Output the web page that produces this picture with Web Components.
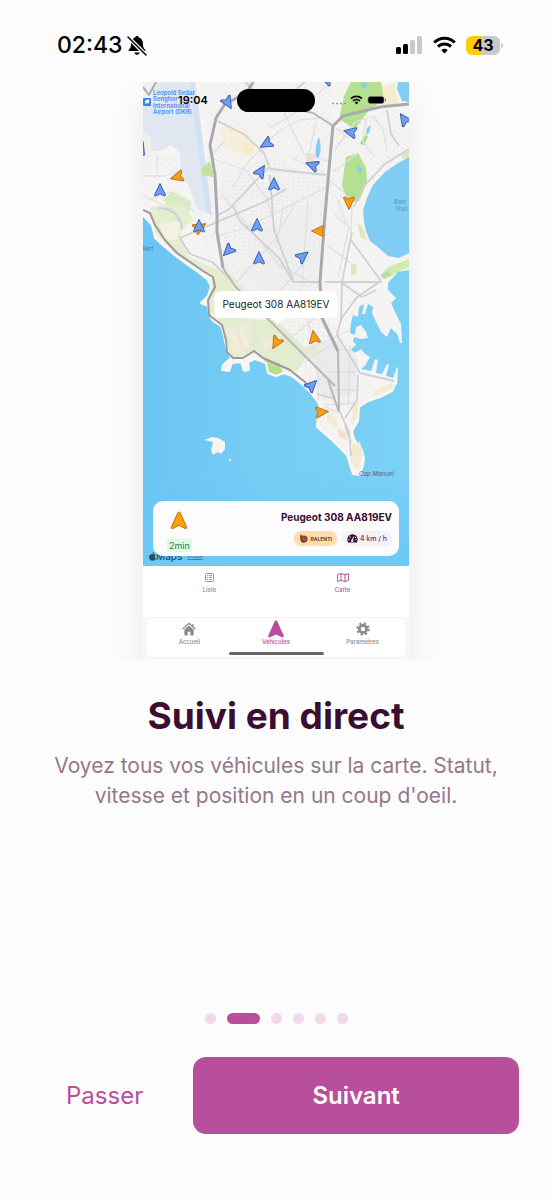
<!DOCTYPE html>
<html lang="fr">
<head>
<meta charset="utf-8">
<meta name="viewport" content="width=device-width, initial-scale=1">
<title>Suivi en direct</title>
<style>
  body {
    background: #fcfcfc;
    font-family: Inter, "Liberation Sans", sans-serif;
    margin: 0;
  }
</style>
</head>
<body>

<onboarding-page>
  <status-bar slot="status" time="02:43" battery="43"></status-bar>
  <app-preview slot="preview"></app-preview>
  <span slot="title">Suivi en direct</span>
  <span slot="text">Voyez tous vos véhicules sur la carte. Statut, vitesse et position en un coup d'oeil.</span>
  <page-dots slot="dots" count="6" current="2"></page-dots>
  <action-bar slot="actions">
    <span slot="skip">Passer</span>
    <span slot="next">Suivant</span>
  </action-bar>
</onboarding-page>

<script>
// status-bar

class StatusBar extends HTMLElement {

  constructor() {
    super();
    this.attachShadow({mode: 'open'});
    this.shadowRoot.innerHTML = `
      <style>
      :host {
        align-items: center;
        box-sizing: border-box;
        color: #000;
        display: flex;
        height: 82px;
        justify-content: space-between;
        padding: 8px 49px 0 57px;
      }

      .side {
        align-items: center;
        display: flex;
      }

      .time {
        font-size: 23px;
        font-weight: 500;
        margin-right: 4px;
      }

      .wifi {
        margin: 0 10px;
      }

      .battery {
        background: linear-gradient(90deg, #ffcc0a 43%, #c9c9c9 43%);
        border-radius: 6px;
        font-size: 16px;
        font-weight: 700;
        line-height: 19px;
        text-align: center;
        width: 34px;
      }

      .cap {
        background: #c9c9c9;
        border-radius: 0 2px 2px 0;
        height: 5px;
        margin-left: 1px;
        width: 2px;
      }

      svg {
        display: block;
      }
      </style>

      <div class="side">
        <span class="time"></span>
        <svg width="20" height="21" viewBox="0 0 20 21">
          <path d="M10 1c1 0 1.700.6 1.900 1.400 2.600.8 4 3 4 5.800 0 3.600.8 5 2.400 6.600.4.500.2 1.200-.5 1.200H2.200c-.8 0-1-.7-.5-1.200C3.300 13.200 4.100 11.800 4.100 8.200 4.100 5.400 5.500 3.200 8.100 2.400 8.300 1.600 9 1 10 1zM7.300 17.500h5.400c-.3 1.300-1.300 2.200-2.700 2.200s-2.400-.9-2.700-2.200z"/>
          <path d="M1 2l18 18" stroke="#fcfcfc" stroke-width="4"/>
          <path d="M1 2l18 18" stroke="#000" stroke-width="1.500" stroke-linecap="round"/>
        </svg>
      </div>
      <div class="side">
        <svg width="27" height="18" viewBox="0 0 27 18">
          <rect x="0" y="11" width="5" height="7" rx="1.500"/>
          <rect x="7" y="8" width="5" height="10" rx="1.500"/>
          <rect x="14" y="4" width="5" height="14" rx="1.500" fill="#c9c9c9"/>
          <rect x="21" y="0" width="5" height="18" rx="1.500" fill="#c9c9c9"/>
        </svg>
        <svg class="wifi" width="23" height="18" viewBox="0 0 23 18" fill="none" stroke="#000" stroke-width="3">
          <path d="M1.200 6.500a14.600 14.600 0 0 1 20.600 0"/>
          <path d="M5 10.600a9.200 9.200 0 0 1 13 0"/>
          <path d="M11.500 17.500l-3.200-3.300a4.500 4.500 0 0 1 6.400 0z" fill="#000" stroke="none"/>
        </svg>
        <div class="battery"></div>
        <div class="cap"></div>
      </div>
    `;
  }

  connectedCallback() {
    this.shadowRoot.querySelector('.time').textContent = this.getAttribute('time');
    this.shadowRoot.querySelector('.battery').textContent = this.getAttribute('battery');
  }

}

customElements.define('status-bar', StatusBar);


// fleet-map

const BLUE = ['#6d9ff6', '#3f5fae'];
const ORANGE = ['#ff9f0a', '#b8741a'];

// x, y, heading, colours
const vehicles = [
  [228, 103, 150, BLUE],
  [266, 144, 240, BLUE],
  [261, 171, 32, BLUE],
  [274, 184, 0, BLUE],
  [141, 148, 20, BLUE],
  [160, 190, 0, BLUE],
  [326, 79, 290, BLUE],
  [312, 165, 290, BLUE],
  [350, 132, 282, BLUE],
  [404, 119, 325, BLUE],
  [200, 227, 60, ORANGE],
  [199, 226, 0, BLUE],
  [257, 225, 0, BLUE],
  [228, 251, 225, BLUE],
  [259, 258, 0, BLUE],
  [303, 256, 52, BLUE],
  [312, 385, 45, BLUE],
  [177, 177, 255, ORANGE],
  [349, 203, 180, ORANGE],
  [318, 231, 270, ORANGE],
  [276, 343, 210, ORANGE],
  [314, 337, 350, ORANGE],
  [322, 412, 85, ORANGE]
];

class FleetMap extends HTMLElement {

  constructor() {
    super();

    let markers = vehicles.map(([x, y, heading, [fill, stroke]]) => `
      <path transform="translate(${x} ${y}) rotate(${heading})" fill="${fill}" stroke="${stroke}"
        d="M0-6.500 5.600 5.300Q5 6.400 3.800 5.800L0 3.800-3.800 5.800Q-5 6.400-5.600 5.300Z"/>
    `).join('');

    this.attachShadow({mode: 'open'});
    this.shadowRoot.innerHTML = `
      <style>
      :host {
        display: block;
      }

      svg {
        display: block;
        width: 100%;
      }

      text {
        font-family: Inter, "Liberation Sans", sans-serif;
        font-size: 6px;
      }
      </style>

      <svg viewBox="143 82 266 484" stroke-linejoin="round">
        <defs>
          <linearGradient id="sea" x1="0" x2="1" y1="0" y2="0">
            <stop offset="0" stop-color="#6ac4f3"/>
            <stop offset=".5" stop-color="#78cdf4"/>
            <stop offset="1" stop-color="#7bd0f5"/>
          </linearGradient>
          <linearGradient id="deep" x1="0" x2="0" y1="0" y2="1">
            <stop offset=".3" stop-color="#6cc8f6" stop-opacity="0"/>
            <stop offset="1" stop-color="#6cc8f6"/>
          </linearGradient>
          <pattern id="blocks" width="6" height="4" patternUnits="userSpaceOnUse" patternTransform="rotate(38)">
            <path d="M0 0H6M0 0V4" stroke="#e4e4e6" fill="none" stroke-width=".7"/>
          </pattern>
          <pattern id="grid" width="5" height="4" patternUnits="userSpaceOnUse" patternTransform="rotate(4)">
            <path d="M0 0H5M0 0V4" stroke="#e2e2e6" fill="none" stroke-width=".7"/>
          </pattern>
        </defs>

        <rect x="143" y="82" width="266" height="484" fill="#f5f4f2"/>

        <!-- built-up areas -->
        <path fill="url(#blocks)" d="M143 155h35l20 60 15 70 60 35 50-10 10-228H205l5 116z"/>
        <path fill="url(#blocks)" d="M333 130l60-22 16 15v30l-45 35-38 90z"/>
        <path fill="url(#grid)" d="M222 175l50-20 52 30-3 125-52 12-45-50z"/>
        <path fill="url(#grid)" d="M270 322l50-12 35 40 3 50-28 22-10-25z"/>
        <path fill="#ececec" opacity=".6" d="M262 230l50-28 6 80-38 20-42-30z"/>
        <path fill="#e9e9ec" opacity=".8" d="M308 345l30-5 20 20-5 35-30 5z"/>

        <!-- airfield -->
        <path fill="#e1e7f1" d="M143 82h49l5 26 5 40 10 67-14-5-10-25-7-12-1-20-9-8-10 6h-10V138l-8-4z"/>
        <path fill="#d3e2f2" d="M190 82h5l8 60 9 74-6-4-8-62z"/>
        <path fill="#f1f0ef" d="M151 138l-8-5v40h8zM143 82v18l8-1 6-17z"/>

        <!-- parks and dry ground -->
        <path fill="#f5efdc" d="M222 125l25 4 8 22-12 5-22-12z"/>
        <path fill="#f5ecd0" d="M240 140l14 2-2 14-10-3zM380 88l15-6 3 24-16-1z"/>
        <path fill="#bfe29c" d="M202 168l8-7 3 12v4l-11-2z"/>
        <path fill="#dbeac0" d="M164 200l8-9 20 11-4 14-19-1z"/>
        <path fill="#e4edd0" d="M150 207l32-3 12 16-14 12 8 24 22 11 22 8 30 35h-28l-24 5-3-22 7-16-20-10-21-15-18-20z"/>
        <path fill="#f4f0e2" d="M160 224l20-3-3 18-12 2z"/>
        <path fill="#e4ecd0" d="M218 316l60 5 26 26 14-2 3 10-16 4-8 12-16-3-18-11-9-6-10 5-14 2-6-12z"/>
        <path fill="#f1ecd9" d="M226 330l20-6 3 24-16 6zM262 338l12 4-8 13z"/>
        <path fill="#b5e08f" d="M264 360l15 3 4 9-8 3-10-3z"/>
        <path fill="#b5e08f" d="M351 82l-7 14-5 23 16 10 14-19 15-10-3-18z"/>
        <path fill="#b5e08f" d="M346 157l12-4 8 15 1 14-8 19-11 2-6-18z"/>
        <path fill="#a6da84" d="M360 144l4-9 4 1-4 9z"/>
        <path fill="#d2e9b0" d="M380 276l8-9 21-8v8l-18 9z"/>
        <path fill="#b8dfa0" d="M380 275l9-4 2 5-7 3z"/>
        <path fill="#dfe7bb" d="M357 224l5 2 5 14-6-2zM351 265l5-2 1 11-6 1zM402 154l7-4v8l-7 1z"/>
        <path fill="#f4dcd6" d="M307 153l8 1-1 8-8-1z"/>

        <!-- inner lakes -->
        <path fill="#82cef3" d="M319 137c2 6 3 18-2 22-3-4-1-18 2-22zM398 82h11v20l-7-1-5-12zM358 166l4 3-1 4-4-1zM367 128l4-3-2 8-3 2zM361 85l4-3 2 4-4 3z"/>

        <!-- seas -->
        <path fill="#7fcdf2" d="M409 157l-11 6-13 9-12 13-6 13-4 12 1 12 2 9 4 10 9 7 9 8 11 2 10-5z"/>
        <path fill="url(#sea)" stroke="#faf9f6" stroke-width="2" d="M141 213l11 12 3 13 10 9 12 10 11 8 10 7 9 7 4 7-3 10-7 7 7 3 1 8 4 7 8 5 3 10 2 10 5 12-8 7-1 5 7 1 3-8 9-1 3 9 5-1-1-8 7-3 11 4 2 10 8 3 8-3 8 3 10 8 8 8 8 10 3 8-3 5-1 12 7 6 8 7 8 8 7 7 3 10 3 9 7 1 3-10 1-7-2-8-8-11-2-8 6-10 1-14 9-6 12-4 12-6 4-8h14v189H141z"/>
        <path fill="url(#deep)" d="M143 430h190l20 48h56v88H143z"/>
        <path fill="#7bd0f5" d="M409 270L398 272 388 283 388 290 396 298 391 303 396 314 401 324 402 343 400 343 397 334 391 328 387 337 381 332 376 322 372 313 373 307 368 304 365 314 362 314 364 304 359 307 358 317 353 315 351 323 350 333 355 335 356 327 361 325 366 332 368 338 361 339 354 337 353 341 356 345 351 349 354 353 358 351 361 349 365 354 370 357 365 366 361 369 371 371 375 359 378 360 376 373 382 374 387 364 389 365 386 376 393 378 397 367 398 368 397 386 409 388z"/>

        <!-- the southern tip -->
        <path fill="#f4ead0" d="M374 391l18-8 2 4-20 9zM356 402l3 2-2 14-6 6 1-11zM328 412l8 5 2 10-11-5zM352 444l8-2 3 12-6 16-6-8z"/>
        <path fill="#f6dcd5" d="M337 428l8 4 3 9-9-4z"/>
        <path fill="#f7f5f1" d="M204 440l8-3 6 1 7 4v7l-4 5-3-2-5 3-2-5 2-8zM229 459h2v2h-2z"/>

        <!-- minor streets -->
        <g fill="none" stroke="#e0e0e4" stroke-width="1.300">
          <path d="M208 157l38 13 22 30 10 42M225 140l-14 16M233 187l15-25 30-30 22-12 20-2"/>
          <path d="M143 176h22l20-7M148 200l22-8 25 20M157 155v18M143 195l30 15 5 12"/>
          <path d="M218 236l28-8 35-18 50-25M237 282l37-42 23-40M222 195l24 28 37 47"/>
          <path d="M270 128l25-15 33-28M284 112l20 42 26 8M292 158l32 15M308 160l8-38"/>
          <path d="M335 150l20-28 18-6 10 13 4 22M366 118l-3 24 9 12M333 172l24-18"/>
          <path d="M326 178l18 14 8 14-1 26M338 200l8 23M336 128l12 10"/>
          <path d="M335 215l14 12-11 50M308 202l-6 85M284 205l-8 43M327 245l24 18"/>
          <path d="M281 290l30-36M274 262l40 22M300 288l14 58M255 308l54-16"/>
          <path d="M254 318v34M237 325l4 20M285 343l30-25M290 358l60-28M305 362l30-20"/>
          <path d="M318 352v48M350 345l-2 60M326 372h30M330 390h28M325 405l30-2M338 412l-14-5"/>
        </g>

        <!-- secondary roads -->
        <g fill="none" stroke="#cfd0d4" stroke-width="1.800">
          <path d="M218 121l27 14 19 18 6 16 56 6M268 168l-40 42-10 5M305 82l-30 24M245 82l15 14"/>
          <path d="M180 238l30-13 52-22 24-14M180 238l10 16 22 8 18 17M270 175l4 55 19 50"/>
          <path d="M182 230c0-12-8-22-24-22M233 205l6 15 40 38 14 24"/>
          <path d="M351 240l30 41-24 16-16 22-4 16 16 26 7 12 34 8"/>
          <path d="M352 232l-10 50-1 40M325 282h56M293 282h28M342 283l20 14M362 297l14-7"/>
          <path d="M409 149l-24 15-22 23-9 20M387 110l4 24 8 12"/>
          <path d="M339 410l10 22 2 24M358 375l-1 25-12 18M317 394l18 5M345 425l6 18"/>
        </g>

        <!-- main roads -->
        <g fill="none" stroke="#a9a9ae" stroke-width="3">
          <path d="M253 82l-6 10-14 8-8 4-9 14-6 27 5 30 2 40v17l6 36"/>
          <path d="M223 268l12 18 32 32 46 46 22 22" stroke-width="2" stroke="#b6b6bb"/>
          <path d="M409 104l-29 3-37 9-10 10-3 32-5 57-5 67 2 36 16 33"/>
          <path d="M270 107l25 2 18 4 19 12M338 350l1 62M328 380l11 32" stroke-width="2" stroke="#b6b6bb"/>
          <path d="M143 210l7 3 5 12 10 15 12 13 13 9 13 9 10 6 2 10-7 13 1 15 13 10 4 15 1 12 6 6h10l11-7 9 7 9 4 18 8 15 12 7 10" stroke="#9f989c" stroke-width="2"/>
          <path d="M143 87l6 8 7-13" stroke-width="2"/>
        </g>

        ${markers}

        <rect x="143" y="98" width="8" height="8" rx="1" fill="#3583f2"/>
        <path d="M149.500 99.500l-1.200 4.500-1.100-1.500-1.500 1.700-.6-.2.600-1.800-1.200-.6 1.700-.8-1.200-.9z" fill="#fff"/>
        <g fill="#4a8eea" font-weight="600">
          <text x="153" y="95">Leopold Sedar</text>
          <text x="153" y="101">Senghor</text>
          <text x="153" y="108">International</text>
          <text x="153" y="114">Airport (DKR)</text>
        </g>
        <g fill="#5b9bc0" font-weight="500">
          <text x="394" y="204">Baie</text>
          <text x="396" y="211">Han</text>
        </g>
        <g fill="#5d7486" font-style="italic" font-weight="500">
          <text x="142" y="251">Fert</text>
          <text x="359" y="476">Cap Manuel</text>
        </g>
      </svg>
    `;
  }

}

customElements.define('fleet-map', FleetMap);


// vehicle-card

class VehicleCard extends HTMLElement {

  constructor() {
    super();
    this.attachShadow({mode: 'open'});
    this.shadowRoot.innerHTML = `
      <style>
      :host {
        background: #fcfcfc;
        border-radius: 10px;
        box-sizing: border-box;
        display: flex;
        height: 55px;
        justify-content: space-between;
        padding: 10px 7px 4px 14px;
      }

      .left, .right {
        display: flex;
        flex-direction: column;
      }

      .left {
        align-items: center;
        justify-content: space-between;
      }

      .right {
        align-items: flex-end;
        gap: 7px;
      }

      .ago {
        background: #dcfae6;
        border-radius: 2px;
        color: #2f7d4f;
        font-size: 9px;
        line-height: 13px;
        padding: 0 2px;
      }

      .name {
        color: #3b0d31;
        font-size: 10px;
        font-weight: 700;
        line-height: 13px;
      }

      .tags {
        display: flex;
        gap: 5px;
      }

      .tag {
        align-items: center;
        background: #f5f1f6;
        border-radius: 7px;
        color: #5b4257;
        display: flex;
        font-size: 7px;
        font-weight: 500;
        gap: 2px;
        height: 15px;
        padding: 0 5px;
      }

      .idle {
        background: #ffdca8;
        color: #6b3a1f;
        font-size: 5px;
        font-weight: 700;
      }
      </style>

      <div class="left">
        <svg width="18" height="19" viewBox="0 0 18 19">
          <path d="M9 1c.7 0 1 .4 1.300 1l6.300 14c.5 1.300-.5 2-1.600 1.400L9 14.300l-6 3.100c-1.100.6-2.100-.1-1.600-1.400L7.700 2C8 1.400 8.300 1 9 1z" fill="#ff9f0a" stroke="#b8741a"/>
        </svg>
        <span class="ago">2min</span>
      </div>
      <div class="right">
        <span class="name"><slot></slot></span>
        <div class="tags">
          <span class="tag idle">
            <svg width="9" height="9" viewBox="0 0 9 9">
              <path d="M1 1.500l1.500-1 .6 1.400C5 .8 8.700 1.800 8.700 4.800S6 9 4.500 8.800 1 7.500 1.300 5z" fill="#7a3f22"/>
              <path d="M3 4.200c1.300-1.500 3.800-.8 3.700.9S4.700 7 4.300 6s.8-1.300 1-.7" fill="none" stroke="#c9806a" stroke-width=".8"/>
            </svg>
            RALENTI
          </span>
          <span class="tag">
            <svg width="11" height="9" viewBox="0 0 11 9">
              <path d="M5.500.3A5.200 5.200 0 0 0 .3 5.500c0 1.200.3 2.100.9 3h8.600c.6-.9.900-1.800.9-3A5.200 5.200 0 0 0 5.500.3z" fill="#3b0d31"/>
              <path d="M5.200 6.500l1.600-4" stroke="#f5f1f6" fill="none"/>
              <g fill="#f5f1f6"><circle cx="5.200" cy="6.700" r="1.200"/><circle cx="1.900" cy="5.600" r=".7"/><circle cx="3" cy="3" r=".7"/><circle cx="9" cy="5.600" r=".7"/><circle cx="8.600" cy="3.400" r=".6"/></g>
            </svg>
            4 km / h
          </span>
        </div>
      </div>
    `;
  }

}

customElements.define('vehicle-card', VehicleCard);


// tab-item

const icons = {
  list: `<svg width="9" height="9" viewBox="0 0 9 9" fill="none" stroke="currentColor" stroke-width=".9"><rect x=".5" y=".5" width="8" height="8" rx="1"/><path d="M2 2.600h1M4 2.600h3M2 4.500h1M4 4.500h3M2 6.400h1M4 6.400h3"/></svg>`,
  map: `<svg width="12" height="9" viewBox="0 0 12 9" fill="none" stroke="currentColor"><path d="M.6 1.700L4 .6l4 1.200L11.400.6v6.800L8 8.500 4 7.300.6 8.500zM4 .6v6.700M8 1.800v6.700"/></svg>`,
  home: `<svg width="14" height="14" viewBox="0 0 14 14" fill="currentColor"><path d="M2.400 7.600L7 3.600l4.600 4v5.100c0 .5-.3.800-.8.800H8.300V9.800H5.700v3.700H3.200c-.5 0-.8-.3-.8-.8z"/><path d="M.6 7L7 1.300 13.400 7M10.900 2v2.700" fill="none" stroke="currentColor" stroke-width="1.200"/></svg>`,
  arrow: `<svg width="16" height="18" viewBox="0 0 16 18" fill="currentColor"><path d="M8 .4c.7 0 1.100.4 1.400 1l6.300 14.200c.5 1.300-.6 2.200-1.800 1.600L8 14.400l-5.900 2.800C.9 17.800-.2 16.900.3 15.600L6.600 1.400C6.900.8 7.300.4 8 .4z"/></svg>`,
  gear: `<svg width="14" height="14" viewBox="0 0 14 14" fill="none" stroke="currentColor"><circle cx="7" cy="7" r="3.600" stroke-width="2.800"/><circle cx="7" cy="7" r="5.700" stroke-width="2" stroke-dasharray="2.240 2.240"/></svg>`
};

class TabItem extends HTMLElement {

  constructor() {
    super();
    this.attachShadow({mode: 'open'});
    this.shadowRoot.innerHTML = `
      <style>
      :host {
        color: #8a8a8a;
        display: block;
        flex: 1 1 0;
      }

      :host([active]) {
        color: #b84f9c;
      }

      button {
        align-items: center;
        background: none;
        border: none;
        color: inherit;
        display: flex;
        flex-direction: column;
        font: 500 6px/8px Inter, "Liberation Sans", sans-serif;
        justify-content: flex-end;
        height: 28px;
        padding: 0;
        width: 100%;
      }

      .icon {
        align-items: center;
        display: flex;
        height: 18px;
      }
      </style>

      <button type="button">
        <span class="icon">${icons[this.getAttribute('icon')] || ''}</span>
        <slot></slot>
      </button>
    `;
  }

}

customElements.define('tab-item', TabItem);


// app-preview

class AppPreview extends HTMLElement {

  constructor() {
    super();
    this.attachShadow({mode: 'open'});
    this.shadowRoot.innerHTML = `
      <style>
      :host {
        background: #f8f8f8;
        box-shadow: 0 16px 32px rgba(0, 0, 0, 0.08);
        clip-path: inset(0 -32px);
        display: block;
        max-width: 266px;
        width: 100%;
      }

      .map {
        position: relative;
      }

      .clock {
        font-size: 11px;
        font-weight: 600;
        left: 35px;
        line-height: 14px;
        position: absolute;
        top: 11px;
      }

      .island {
        background: #000;
        border-radius: 12px;
        height: 23px;
        left: 94px;
        position: absolute;
        top: 7px;
        width: 78px;
      }

      .signal {
        position: absolute;
        right: 23px;
        top: 13px;
      }

      .callout {
        background: #fff;
        border-radius: 6px;
        color: #222;
        font-size: 10px;
        left: 50%;
        line-height: 27px;
        padding: 0 8px;
        position: absolute;
        top: 209px;
        transform: translateX(-50%);
        white-space: nowrap;
      }

      .callout::after {
        border: 7px solid transparent;
        border-bottom: none;
        border-top-color: #fff;
        content: "";
        left: 56px;
        position: absolute;
        top: 26px;
      }

      .credit {
        align-items: center;
        bottom: 3px;
        color: #2c4a5e;
        display: flex;
        font-size: 10px;
        font-weight: 500;
        left: 6px;
        line-height: 14px;
        position: absolute;
      }

      .credit a {
        color: #4d7f9d;
        font-size: 6px;
        margin-left: 5px;
      }

      vehicle-card {
        bottom: 10px;
        left: 10px;
        position: absolute;
        right: 10px;
      }

      .views {
        background: #fff;
        display: flex;
        height: 51px;
      }

      .nav {
        background: #fff;
        border-radius: 6px;
        box-shadow: 0 0 2px rgba(0, 0, 0, 0.1);
        display: flex;
        flex-direction: column;
        height: 39px;
        justify-content: space-between;
        margin: 1px 3px 0;
      }

      .row {
        display: flex;
      }

      .home {
        align-self: center;
        background: #666;
        border-radius: 2px;
        height: 3px;
        margin-bottom: 2px;
        width: 95px;
      }

      .foot {
        height: 3px;
      }
      </style>

      <div class="map">
        <fleet-map></fleet-map>
        <span class="clock">19:04</span>
        <div class="island"></div>
        <svg class="signal" width="54" height="10" viewBox="0 0 54 10">
          <path d="M0 8.500h14" stroke="#999" stroke-width="1.500" stroke-dasharray="2 2"/>
          <path d="M19 3.600a8 8 0 0 1 11 0M21 6a5 5 0 0 1 7 0" fill="none" stroke="#000" stroke-width="1.600"/>
          <path d="M24.500 9.500l-1.800-2a2.500 2.500 0 0 1 3.600 0z"/>
          <rect x="36" y="1.500" width="16" height="7" rx="2.500" fill="#000" stroke="#777" stroke-width=".6"/>
          <path d="M53.400 4v2.500" stroke="#777"/>
        </svg>
        <div class="callout">Peugeot 308 AA819EV</div>
        <div class="credit">
          <svg width="7" height="9" viewBox="0 0 7 9" fill="currentColor"><path d="M3.600 2.400C4.400 2 5.900 1.700 6.600 3c-1.300.8-1.100 2.600.3 3.200C6.300 7.800 5.400 9 4.500 8.600c-.6-.3-1-.3-1.600 0C1.500 9.200.1 7 .1 5 .1 2.600 2 1.600 3.600 2.400zM3.500 2C3.500.9 4.200.2 5 0 5.100 1 4.500 1.900 3.500 2z"/></svg>
          Maps <a href="#legal">Legal</a>
        </div>
        <vehicle-card>Peugeot 308 AA819EV</vehicle-card>
      </div>
      <div class="views">
        <tab-item icon="list">Liste</tab-item>
        <tab-item icon="map" active>Carte</tab-item>
      </div>
      <div class="nav">
        <div class="row">
          <tab-item icon="home">Accueil</tab-item>
          <tab-item icon="arrow" active>Véhicules</tab-item>
          <tab-item icon="gear">Paramètres</tab-item>
        </div>
        <div class="home"></div>
      </div>
      <div class="foot"></div>
    `;
  }

}

customElements.define('app-preview', AppPreview);


// page-dots

class PageDots extends HTMLElement {

  constructor() {
    super();
    this.attachShadow({mode: 'open'});
  }

  connectedCallback() {
    let dots = '';
    for (let i = 1; i <= Number(this.getAttribute('count')); i++) {
      dots += i == this.getAttribute('current') ? '<i class="current"></i>' : '<i></i>';
    }
    this.shadowRoot.innerHTML = `
      <style>
      :host {
        display: flex;
        gap: 11px;
        justify-content: center;
      }

      i {
        background: #f1d9eb;
        border-radius: 6px;
        height: 11px;
        width: 11px;
      }

      .current {
        background: #b84f9c;
        width: 33px;
      }
      </style>
      ${dots}
    `;
  }

}

customElements.define('page-dots', PageDots);


// action-bar

class ActionBar extends HTMLElement {

  constructor() {
    super();
    this.attachShadow({mode: 'open'});
    this.shadowRoot.innerHTML = `
      <style>
      :host {
        display: flex;
        gap: 17px;
        padding: 33px 33px 66px;
      }

      button {
        background: none;
        border: none;
        border-radius: 13px;
        color: #b84f9c;
        cursor: pointer;
        font-family: inherit;
        font-size: 24px;
        height: 77px;
        padding: 0 33px;
      }

      .next {
        background: #b84f9c;
        color: white;
        flex: 1;
        font-weight: 600;
      }
      </style>

      <button type="button" class="skip"><slot name="skip"></slot></button>
      <button type="button" class="next"><slot name="next"></slot></button>
    `;
  }

}

customElements.define('action-bar', ActionBar);


// onboarding-page

class OnboardingPage extends HTMLElement {

  constructor() {
    super();
    this.attachShadow({mode: 'open'});
    this.shadowRoot.innerHTML = `
      <style>
      :host {
        display: flex;
        flex-direction: column;
        min-height: 100vh;
      }

      main {
        align-items: center;
        display: flex;
        flex: 1;
        flex-direction: column;
        padding-bottom: 33px;
        text-align: center;
      }

      h1 {
        color: #3b0d31;
        font-size: 37px;
        font-weight: 700;
        line-height: 46px;
        margin: 33px 33px 12px;
      }

      p {
        color: #93788d;
        font-size: 21px;
        line-height: 30px;
        margin: 0 44px;
      }
      </style>

      <slot name="status"></slot>
      <main>
        <slot name="preview"></slot>
        <h1><slot name="title"></slot></h1>
        <p><slot name="text"></slot></p>
      </main>
      <slot name="dots"></slot>
      <slot name="actions"></slot>
    `;
  }

}

customElements.define('onboarding-page', OnboardingPage);
</script>
</body>
</html>
